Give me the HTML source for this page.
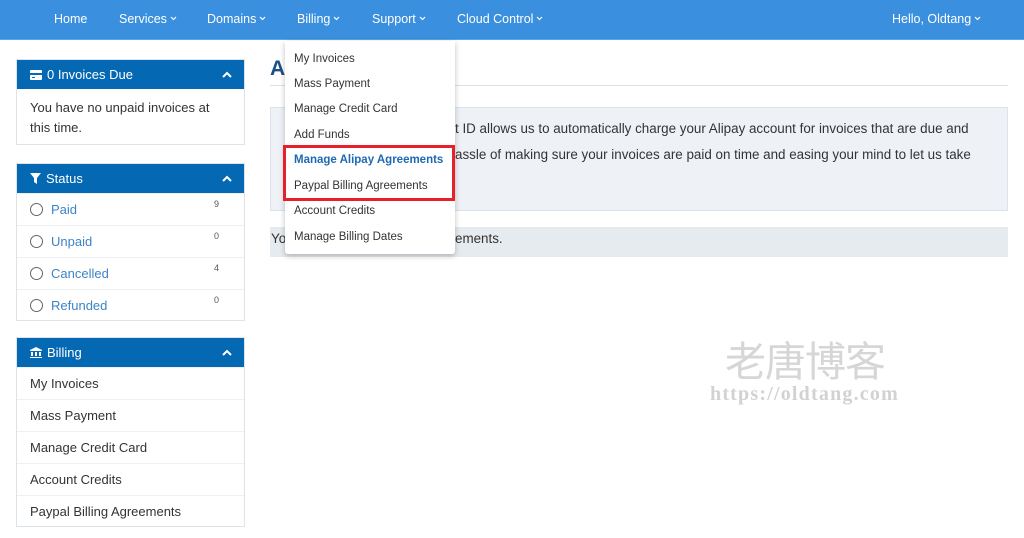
<!DOCTYPE html>
<html><head><meta charset="utf-8"><style>
*{box-sizing:border-box;margin:0;padding:0}
body{width:1024px;height:538px;overflow:hidden;background:#fff;font-family:"Liberation Sans",sans-serif;color:#333;position:relative}
.nav{position:absolute;left:0;top:0;width:1024px;height:40px;background:#3a8fde;border-bottom:1px solid #5aa6ea}
.nav span{position:absolute;top:12px;color:#fff;font-size:12.5px;white-space:nowrap}
.car{display:inline-block;width:7px;height:5px;margin-left:3px;vertical-align:2px}
.panel{position:absolute;left:16px;width:229px;border:1px solid #dde3ea;background:#fff}
.ph{height:29px;background:#0568b3;color:#fff;font-size:13px;padding:7px 0 0 13px;position:relative}
.ph .up{position:absolute;right:12px;top:11px}
.row{height:32px;border-top:1px solid #eef1f4;font-size:13px;padding:8px 0 0 13px;position:relative}
.row:first-child{border-top:none}
.rad{display:inline-block;width:13px;height:13px;border:1.5px solid #666;border-radius:50%;vertical-align:-2px;margin-right:8px}
.blue{color:#3d84c6}
.cnt{position:absolute;left:197px;top:5px;font-size:9px;color:#555}
.dd{position:absolute;left:285px;top:41px;width:170px;height:213px;background:#fff;box-shadow:0 2px 6px rgba(0,0,0,.25);border-radius:0 0 3px 3px}
.dd div{position:absolute;left:9px;font-size:11.5px;color:#333}
</style></head><body>
<div class="nav">
<span style="left:54px">Home</span>
<span style="left:119px">Services<svg class="car" viewBox="0 0 7 5"><path d="M1 1L3.5 3.5L6 1" stroke="#fff" stroke-width="1.2" fill="none"/></svg></span>
<span style="left:207px">Domains<svg class="car" viewBox="0 0 7 5"><path d="M1 1L3.5 3.5L6 1" stroke="#fff" stroke-width="1.2" fill="none"/></svg></span>
<span style="left:297px">Billing<svg class="car" viewBox="0 0 7 5"><path d="M1 1L3.5 3.5L6 1" stroke="#fff" stroke-width="1.2" fill="none"/></svg></span>
<span style="left:372px">Support<svg class="car" viewBox="0 0 7 5"><path d="M1 1L3.5 3.5L6 1" stroke="#fff" stroke-width="1.2" fill="none"/></svg></span>
<span style="left:457px">Cloud Control<svg class="car" viewBox="0 0 7 5"><path d="M1 1L3.5 3.5L6 1" stroke="#fff" stroke-width="1.2" fill="none"/></svg></span>
<span style="left:892px">Hello, Oldtang<svg class="car" viewBox="0 0 7 5"><path d="M1 1L3.5 3.5L6 1" stroke="#fff" stroke-width="1.2" fill="none"/></svg></span>
</div>

<div class="panel" style="top:59px;height:86px">
<div class="ph"><svg width="12" height="10" style="vertical-align:-1px;margin-right:5px"><rect x="0" y="0" width="12" height="10" rx="1" fill="#fff"/><rect x="0" y="3" width="12" height="2" fill="#0568b3"/><rect x="2" y="7" width="3" height="1" fill="#0568b3"/></svg>0 Invoices Due<svg class="up" width="10" height="7"><path d="M1 6L5 2L9 6" stroke="#fff" stroke-width="2" fill="none"/></svg></div>
<div style="padding:9px 13px;font-size:13px;line-height:20px">You have no unpaid invoices at this time.</div>
</div>

<div class="panel" style="top:163px;height:158px">
<div class="ph"><svg width="11" height="11" style="vertical-align:-1px;margin-right:5px"><path d="M0 0H11L7 5V11L4 9V5Z" fill="#fff"/></svg>Status<svg class="up" width="10" height="7"><path d="M1 6L5 2L9 6" stroke="#fff" stroke-width="2" fill="none"/></svg></div>
<div class="row"><span class="rad"></span><span class="blue">Paid</span><span class="cnt">9</span></div>
<div class="row"><span class="rad"></span><span class="blue">Unpaid</span><span class="cnt">0</span></div>
<div class="row"><span class="rad"></span><span class="blue">Cancelled</span><span class="cnt">4</span></div>
<div class="row"><span class="rad"></span><span class="blue">Refunded</span><span class="cnt">0</span></div>
</div>

<div class="panel" style="top:337px;height:190px">
<div class="ph"><svg width="12" height="11" style="vertical-align:-1px;margin-right:5px"><path d="M0 3L6 0L12 3V4H0Z M1 5H3V9H1Z M5 5H7V9H5Z M9 5H11V9H9Z M0 10H12V11H0Z" fill="#fff"/></svg>Billing<svg class="up" width="10" height="7"><path d="M1 6L5 2L9 6" stroke="#fff" stroke-width="2" fill="none"/></svg></div>
<div class="row">My Invoices</div>
<div class="row">Mass Payment</div>
<div class="row">Manage Credit Card</div>
<div class="row">Account Credits</div>
<div class="row">Paypal Billing Agreements</div>
</div>

<div style="position:absolute;left:270px;top:57px;font-size:21px;font-weight:bold;color:#1b4f86">A</div>
<div style="position:absolute;left:270px;top:85px;width:738px;height:1px;background:#dde1e5"></div>
<div style="position:absolute;left:270px;top:107px;width:738px;height:104px;background:#eef2f7;border:1px solid #dbe3ec"></div>
<div style="position:absolute;left:455px;top:121px;font-size:13.4px;color:#333;white-space:nowrap">t ID allows us to automatically charge your Alipay account for invoices that are due and</div>
<div style="position:absolute;left:455px;top:147px;font-size:13.4px;color:#333;white-space:nowrap">assle of making sure your invoices are paid on time and easing your mind to let us take</div>
<div style="position:absolute;left:270px;top:227px;width:738px;height:30px;background:#e6ebf0"></div>
<div style="position:absolute;left:271px;top:231px;font-size:13.4px">Yo</div>
<div style="position:absolute;left:455px;top:231px;font-size:13.4px">ements.</div>

<div class="dd">
<div style="top:12px">My Invoices</div>
<div style="top:37px">Mass Payment</div>
<div style="top:62px">Manage Credit Card</div>
<div style="top:88px">Add Funds</div>
<div style="top:113px;color:#1d6ab2;font-weight:bold">Manage Alipay Agreements</div>
<div style="top:139px">Paypal Billing Agreements</div>
<div style="top:164px">Account Credits</div>
<div style="top:190px">Manage Billing Dates</div>
</div>
<div style="position:absolute;left:283px;top:145px;width:172px;height:56px;border:3px solid #e8202a"></div>

<div style="position:absolute;left:725px;top:334px;font-size:41px;color:#d6d6d6;font-family:'Noto Sans CJK SC',sans-serif;line-height:48px;letter-spacing:-1px">老唐博客</div>
<div style="position:absolute;left:710px;top:383px;font-size:20px;letter-spacing:1.2px;color:#d2d2d2;font-weight:bold;font-family:'Liberation Serif',serif">https://oldtang.com</div>
</body></html>
